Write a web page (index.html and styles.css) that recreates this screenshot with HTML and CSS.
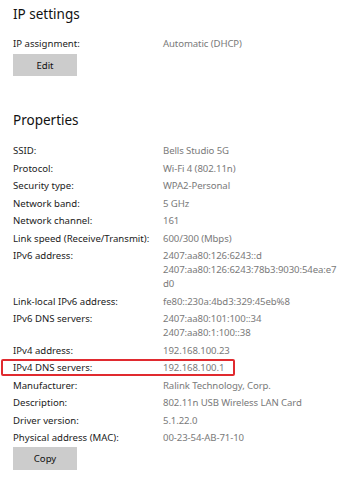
FILE: index.html
```html
<!DOCTYPE html>
<html>
<head>
<meta charset="utf-8">
<link rel="stylesheet" href="styles.css">
</head>
<body>
<div class="page">
  <h1 class="title">IP settings</h1>
  <div class="row first"><span class="label">IP assignment:</span><span class="value">Automatic (DHCP)</span></div>
  <button class="btn">Edit</button>

  <h1 class="title props">Properties</h1>
  <div class="list">
    <div class="row"><span class="label">SSID:</span><span class="value">Bells Studio 5G</span></div>
    <div class="row"><span class="label">Protocol:</span><span class="value">Wi-Fi 4 (802.11n)</span></div>
    <div class="row"><span class="label">Security type:</span><span class="value">WPA2-Personal</span></div>
    <div class="row"><span class="label">Network band:</span><span class="value">5 GHz</span></div>
    <div class="row"><span class="label">Network channel:</span><span class="value">161</span></div>
    <div class="row"><span class="label">Link speed (Receive/Transmit):</span><span class="value">600/300 (Mbps)</span></div>
    <div class="row"><span class="label">IPv6 address:</span><span class="value"><span class="line">2407:aa80:126:6243::d</span><span class="line">2407:aa80:126:6243:78b3:9030:54ea:e7</span><span class="line">d0</span></span></div>
    <div class="row"><span class="label">Link-local IPv6 address:</span><span class="value">fe80::230a:4bd3:329:45eb%8</span></div>
    <div class="row"><span class="label">IPv6 DNS servers:</span><span class="value"><span class="line">2407:aa80:101:100::34</span><span class="line">2407:aa80:1:100::38</span></span></div>
    <div class="row"><span class="label">IPv4 address:</span><span class="value">192.168.100.23</span></div>
    <div class="row marked"><span class="label">IPv4 DNS servers:</span><span class="value">192.168.100.1</span></div>
    <div class="row"><span class="label">Manufacturer:</span><span class="value">Ralink Technology, Corp.</span></div>
    <div class="row"><span class="label">Description:</span><span class="value">802.11n USB Wireless LAN Card</span></div>
    <div class="row"><span class="label">Driver version:</span><span class="value">5.1.22.0</span></div>
    <div class="row"><span class="label">Physical address (MAC):</span><span class="value">00-23-54-AB-71-10</span></div>
  </div>
  <button class="btn copy">Copy</button>
</div>
</body>
</html>
```

FILE: styles.css
```css
html, body {
  margin: 0;
  padding: 0;
  background: #ffffff;
}

.page {
  padding: 4px 13px 0 13px;
  font-family: "Noto Sans", "Open Sans", sans-serif;
  font-size: 9.6px;
  color: #1b1b1b;
}

.title {
  margin: 0;
  font-size: 13.5px;
  font-weight: 400;
  line-height: 20px;
  color: #111;
}

.title.props {
  margin-top: 34px;
}

.row {
  position: relative;
  display: grid;
  grid-template-columns: 150px 1fr;
  line-height: 14px;
}

.row.first {
  margin-top: 13px;
}

.label {
  color: #1b1b1b;
  white-space: nowrap;
}

.value {
  color: #7a7a7a;
  white-space: nowrap;
  letter-spacing: -0.1px;
}

.line {
  display: block;
}

.list {
  margin-top: 14px;
  display: flex;
  flex-direction: column;
  gap: 3.5px;
}

.marked::after {
  content: "";
  position: absolute;
  left: -12px;
  top: -2px;
  width: 234px;
  height: 17px;
  border: 2px solid #e02a2f;
  border-radius: 2px;
  box-sizing: border-box;
}

.btn {
  display: block;
  margin-top: 3px;
  width: 64px;
  height: 22px;
  padding: 0;
  border: 0;
  background: #cccccc;
  font-family: "Noto Sans", "Open Sans", sans-serif;
  font-size: 9.6px;
  color: #111;
}

.btn.copy {
  height: 23px;
  margin-top: 2px;
}
```
